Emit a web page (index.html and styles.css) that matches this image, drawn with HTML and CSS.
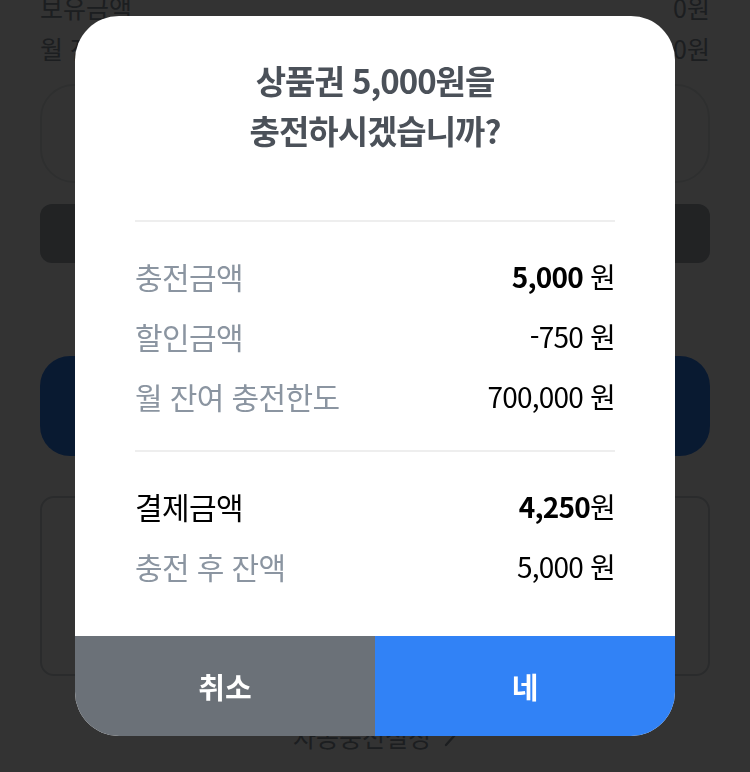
FILE: index.html
```html
<!DOCTYPE html>
<html lang="ko">
<head>
    <meta charset="UTF-8">
    <meta name="viewport" content="width=device-width, initial-scale=1.0">
    <title>상품권 충전</title>
    <link rel="stylesheet" href="styles.css">
</head>
<body>

    <!-- 뒤쪽 충전 화면 -->
    <div class="page">
        <div class="sum-row"><span>보유금액</span><span>0원</span></div>
        <div class="sum-row"><span>월 잔여 충전한도</span><span>700,000원</span></div>
        <div class="amount-box"></div>
        <div class="gray-btn"></div>
        <div class="blue-box"></div>
        <div class="outline-box"></div>
        <div class="auto-link">
            자동충전설정
            <svg width="14" height="22" viewBox="0 0 14 22"><path d="M3 2 L11 11 L3 20" fill="none" stroke="#8b95a1" stroke-width="2.4" stroke-linecap="round"/></svg>
        </div>
    </div>

    <!-- 충전 확인 팝업 -->
    <div class="dim">
        <div class="modal">
            <div class="modal-body">
                <h2 class="modal-title">상품권 5,000원을<br>충전하시겠습니까?</h2>

                <div class="info-group">
                    <div class="info-row"><span class="label">충전금액</span><span class="value"><b>5,000</b> 원</span></div>
                    <div class="info-row"><span class="label">할인금액</span><span class="value">-750 원</span></div>
                    <div class="info-row"><span class="label">월 잔여 충전한도</span><span class="value">700,000 원</span></div>
                </div>

                <div class="info-group">
                    <div class="info-row"><span class="label strong">결제금액</span><span class="value"><b>4,250</b>원</span></div>
                    <div class="info-row"><span class="label">충전 후 잔액</span><span class="value">5,000 원</span></div>
                </div>
            </div>

            <div class="modal-buttons">
                <button class="btn-cancel">취소</button>
                <button class="btn-ok">네</button>
            </div>
        </div>
    </div>

</body>
</html>
```

FILE: styles.css
```css
/* 기본 */
body { margin: 0; background: #fff; font-family: "Noto Sans CJK KR", "Noto Sans", sans-serif; overflow: hidden; height: 772px; }

/* 뒤 화면 */
.page { padding: 0 40px; margin-top: -13px; }
.sum-row { display: flex; justify-content: space-between; font-size: 25px; line-height: 41px; color: #8b95a1; }
.amount-box { height: 95px; margin-top: 15px; border: 2px solid #e5e8eb; border-radius: 34px; }
.gray-btn { height: 59px; margin-top: 21px; background: #a8aeb5; border-radius: 12px; }
.blue-box { height: 100px; margin-top: 93px; background: #3182f6; border-radius: 30px; }
.outline-box { height: 176px; margin-top: 40px; border: 2px solid #d1d6db; border-radius: 14px; }
.auto-link { display: flex; justify-content: center; align-items: center; gap: 12px; margin-top: 42px; font-size: 25px; color: #8b95a1; }

/* 딤 + 팝업 */
.dim { position: fixed; top: 0; left: 0; right: 0; bottom: 0; background: rgba(0, 0, 0, 0.8); display: flex; justify-content: center; align-items: flex-start; padding-top: 16px; }
.modal { width: 600px; background: #fff; border-radius: 44px; overflow: hidden; }
.modal-body { padding: 39px 60px 40px; }
.modal-title { margin: 0; font-size: 33px; line-height: 50px; font-weight: bold; color: #4b5159; text-align: center; letter-spacing: -1px; }

.info-group { border-top: 2px solid #eeeeee; padding-top: 24px; }
.info-group:first-of-type { margin-top: 65px; padding-bottom: 24px; }
.info-row { display: flex; justify-content: space-between; align-items: center; height: 60px; font-size: 28px; letter-spacing: -0.4px; }
.label { color: #8b95a1; font-size: 30px; letter-spacing: -0.6px; }
.label.strong { color: #000; }
.value { color: #000; letter-spacing: -0.8px; }
.value b { font-weight: bold; }

.modal-buttons { display: flex; }
.modal-buttons button { flex: 1; height: 100px; border: none; font-family: inherit; font-size: 29px; font-weight: bold; color: #fff; cursor: pointer; }
.btn-cancel { background: #6b7178; }
.btn-ok { background: #3182f6; }
```
